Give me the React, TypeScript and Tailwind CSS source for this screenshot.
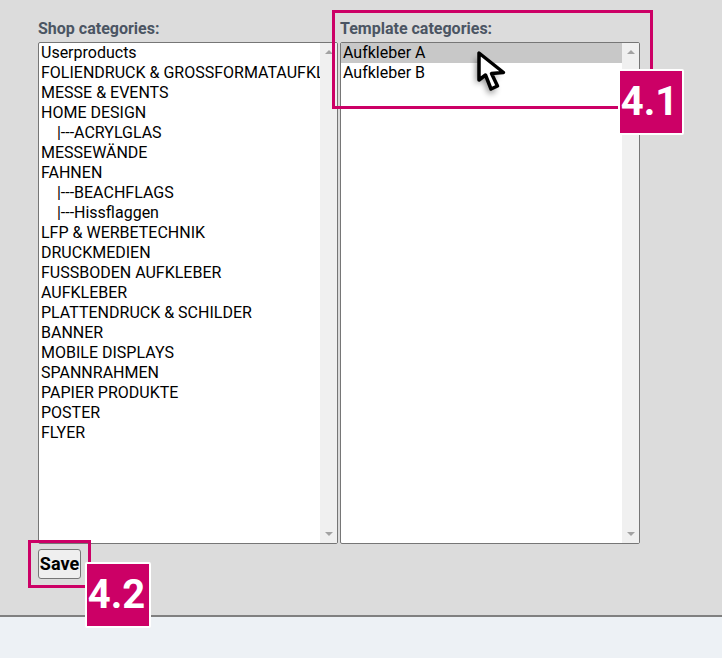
const shopCategories = [
  'Userproducts',
  'FOLIENDRUCK & GROSSFORMATAUFKLEBER',
  'MESSE & EVENTS',
  'HOME DESIGN',
  '    |---ACRYLGLAS',
  'MESSEWÄNDE',
  'FAHNEN',
  '    |---BEACHFLAGS',
  '    |---Hissflaggen',
  'LFP & WERBETECHNIK',
  'DRUCKMEDIEN',
  'FUSSBODEN AUFKLEBER',
  'AUFKLEBER',
  'PLATTENDRUCK & SCHILDER',
  'BANNER',
  'MOBILE DISPLAYS',
  'SPANNRAHMEN',
  'PAPIER PRODUKTE',
  'POSTER',
  'FLYER',
]

const templateCategories = ['Aufkleber A', 'Aufkleber B']

function ListBox({ items, selected }: { items: string[]; selected?: number }) {
  return (
    <div className="flex h-[502px] w-[300px] overflow-hidden rounded-[2px] border border-[#767676] bg-white">
      <ul className="min-w-0 flex-1 overflow-hidden">
        {items.map((item, i) => (
          <li
            key={item}
            className={`h-5 overflow-hidden pl-[2px] text-[16px] leading-5 whitespace-pre text-black ${i === selected ? 'bg-[#c8c8c8]' : ''}`}
          >
            {item}
          </li>
        ))}
      </ul>
      <div className="flex w-[17px] shrink-0 flex-col items-center justify-between bg-[#f0f0f0] py-[7px]">
        <svg width="8" height="4" viewBox="0 0 8 4" className="fill-[#a3a3a3]">
          <path d="M4 0 8 4H0Z" />
        </svg>
        <svg width="8" height="4" viewBox="0 0 8 4" className="fill-[#a3a3a3]">
          <path d="M0 0H8L4 4Z" />
        </svg>
      </div>
    </div>
  )
}

function Badge({ label, className }: { label: string; className: string }) {
  return (
    <div
      className={`absolute flex h-[66px] w-[66px] items-center justify-center rounded-[2px] border-[2px] border-white bg-[#cc0066] pr-[3px] text-[40px] font-bold text-white ${className}`}
    >
      {label}
    </div>
  )
}

export default function App() {
  return (
    <div className="relative flex h-[658px] w-[722px] flex-col overflow-hidden bg-[#dcdcdc] font-['Roboto',sans-serif]">
      <div className="flex-1 pt-5 pl-[38px]">
        <div className="flex gap-[2px]">
          <div className="w-[300px]">
            <label className="block h-[22px] text-[16px] leading-[18px] font-bold text-[#4b5563]">Shop categories:</label>
            <ListBox items={shopCategories} />
          </div>
          <div className="w-[300px]">
            <label className="block h-[22px] text-[16px] leading-[18px] font-bold text-[#4b5563]">Template categories:</label>
            <ListBox items={templateCategories} selected={0} />
          </div>
        </div>
        <button className="mt-[5px] h-[30px] w-[43px] rounded-[3px] border border-[#767676] bg-[#efefef] pb-[2px] text-center text-[18px] font-bold text-black">
          Save
        </button>
      </div>
      <div className="h-[43px] border-t-2 border-[#808080] bg-[#edf1f5]" />

      {/* annotation overlays */}
      <div className="absolute top-[10px] left-[332px] h-[99px] w-[321px] border-[3px] border-[#cc0066]" />
      <Badge label="4.1" className="top-[69px] left-[618px]" />
      <div className="absolute top-[540px] left-[28px] h-[48px] w-[63px] border-[3px] border-[#cc0066]" />
      <Badge label="4.2" className="top-[562px] left-[85px]" />

      <svg className="absolute top-[44px] left-[470px]" width="44" height="60" viewBox="0 0 44 60">
        <defs>
          <filter id="cursor-shadow" x="-40%" y="-40%" width="180%" height="180%">
            <feGaussianBlur stdDeviation="3" />
          </filter>
        </defs>
        <path d="M6 13 V40 L13 35 L19 50 L26 47 L20 33 L30 32 Z" fill="#000" opacity="0.45" filter="url(#cursor-shadow)" />
        <path d="M9 9 V36 L15.5 31 L21 45 L27.5 42 L21.5 29.5 L33.5 28.5 Z" fill="#fff" stroke="#000" strokeWidth="3.5" strokeLinejoin="round" />
      </svg>
    </div>
  )
}
